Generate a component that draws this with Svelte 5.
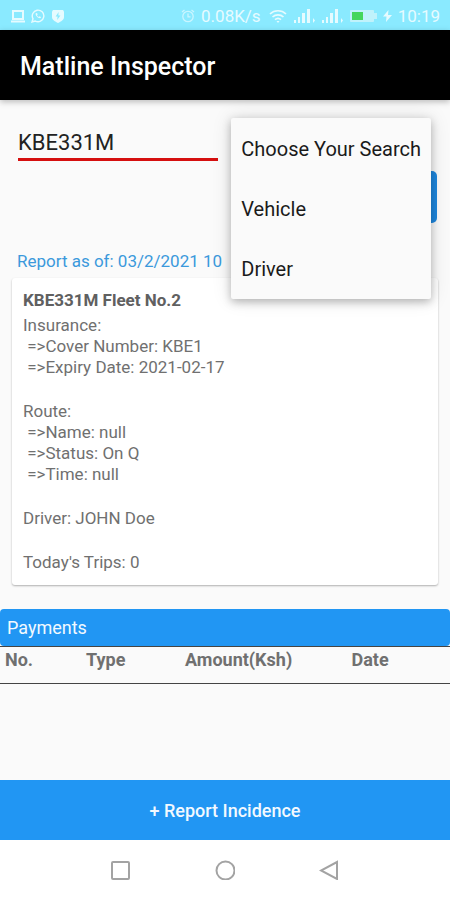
<script lang="ts">
	let plate = $state('KBE331M');
	let menuOpen = $state(true);
	let searchType = $state('Choose Your Search');

	const searchTypes = ['Choose Your Search', 'Vehicle', 'Driver'];
	const columns = ['No.', 'Type', 'Amount(Ksh)', 'Date'];

	const report = [
		['Insurance:', ' =>Cover Number: KBE1', ' =>Expiry Date: 2021-02-17'],
		['Route:', ' =>Name: null', ' =>Status: On Q', ' =>Time: null'],
		['Driver: JOHN Doe'],
		["Today's Trips: 0"]
	];

	function choose(type: string) {
		searchType = type;
		menuOpen = false;
	}
</script>

{#snippet signal()}
	<svg width="22" height="14" viewBox="0 0 22 14" fill="currentColor">
		<rect x="0" y="11" width="2" height="3" />
		<rect x="4" y="8" width="2" height="6" />
		<rect x="8" y="4" width="3" height="10" />
		<rect x="13" y="0" width="3" height="14" />
		<path d="M19 9l2 2.5-2 2.5z" />
	</svg>
{/snippet}

<div class="screen">
	<div class="status-bar">
		<div class="status-group">
			<svg width="14" height="14" viewBox="0 0 14 14" fill="none" stroke="currentColor">
				<rect x="2" y="2" width="10" height="8" stroke-width="2" />
				<path d="M0 12.5h14" stroke-width="2" />
			</svg>
			<svg width="14" height="14" viewBox="0 0 14 14" fill="none" stroke="currentColor">
				<path d="M1 13l1-3.2A5.8 5.8 0 1 1 4.2 12z" stroke-width="1.4" />
				<path
					d="M4.7 4.2c-.6 2.4 2.6 5.5 5 4.9l.3-1.2-1.5-.7-.8.7C6.9 7.5 6.3 6.9 6 6.2l.7-.8-.7-1.5z"
					fill="currentColor"
					stroke="none"
				/>
			</svg>
			<svg width="14" height="14" viewBox="0 0 14 14">
				<path d="M2 1h10l1 1.5V8c0 3-3 4.5-6 6-3-1.500-6-3-6-6V2.5z" fill="currentColor" />
				<path d="M7.6 3L4.6 7.6h2L6.2 11l3.2-4.6h-2z" fill="#8aeaff" />
			</svg>
		</div>
		<div class="status-group">
			<svg width="14" height="14" viewBox="0 0 14 14" fill="none" stroke="currentColor" opacity="0.7">
				<circle cx="7" cy="7.5" r="5.2" stroke-width="1.3" />
				<path d="M7 4.5v3.3h2.5M1 3l2.5-2M13 3l-2.500-2" stroke-width="1.3" />
			</svg>
			<span>0.08K/s</span>
			<svg class="wifi" width="18" height="14" viewBox="0 0 18 14" fill="none" stroke="currentColor">
				<path
					d="M1 5a11.5 11.5 0 0 1 16 0M3.500 8a8 8 0 0 1 11 0M6 10.7a4.5 4.5 0 0 1 6 0"
					stroke-width="1.7"
				/>
				<path d="M7.5 12h3L9 14z" fill="currentColor" stroke="none" />
			</svg>
			{@render signal()}
			{@render signal()}
			<svg width="27" height="12" viewBox="0 0 27 12">
				<rect x="0" y="0" width="24" height="12" rx="1" fill="#c0f2fb" />
				<rect x="24" y="3" width="3" height="6" fill="#c0f2fb" />
				<rect x="2" y="2" width="11" height="8" fill="#45d65b" />
			</svg>
			<svg width="9" height="12" viewBox="0 0 9 12" fill="currentColor">
				<path d="M5.5 0L0 6.5h3.5L3 12l6-7H5z" />
			</svg>
			<span>10:19</span>
		</div>
	</div>

	<header class="app-bar">
		<h1>Matline Inspector</h1>
	</header>

	<main>
		<form class="search" onsubmit={(e) => e.preventDefault()}>
			<input type="text" aria-label="Plate number" bind:value={plate} />
			<button class="search-button" type="submit" aria-label="Search"></button>
		</form>

		{#if menuOpen}
			<div class="menu" role="listbox" aria-label="Search type">
				{#each searchTypes as type}
					<button
						type="button"
						role="option"
						aria-selected={type === searchType}
						onclick={() => choose(type)}>{type}</button
					>
				{/each}
			</div>
		{/if}

		<p class="report-date">Report as of: 03/2/2021 10</p>

		<section class="card">
			<h2>KBE331M Fleet No.2</h2>
			<div class="report">
				{#each report as lines}
					<p>{lines.join('\n')}</p>
				{/each}
			</div>
		</section>

		<section class="payments">
			<h2>Payments</h2>
			<table>
				<thead>
					<tr>
						{#each columns as column}
							<th>{column}</th>
						{/each}
					</tr>
				</thead>
			</table>
		</section>
	</main>

	<button class="report-button" type="button">+ Report Incidence</button>

	<nav class="system-nav">
		<button type="button" aria-label="Recent apps">
			<svg width="20" height="20" viewBox="0 0 20 20">
				<rect x="1" y="2" width="17" height="17" rx="1" />
			</svg>
		</button>
		<button type="button" aria-label="Home">
			<svg width="20" height="20" viewBox="0 0 20 20">
				<circle cx="10.5" cy="10.5" r="9" />
			</svg>
		</button>
		<button type="button" aria-label="Back">
			<svg width="20" height="20" viewBox="0 0 20 20">
				<path d="M18 2v17L2 10.5z" />
			</svg>
		</button>
	</nav>
</div>

<style>
	:global(body) {
		margin: 0;
	}

	.screen {
		display: flex;
		flex-direction: column;
		min-height: 100vh;
		background: #fafafa;
		font-family: Roboto, 'Liberation Sans', sans-serif;
		color: #707070;
	}

	h1,
	h2,
	p {
		margin: 0;
	}

	button,
	input {
		font-family: inherit;
		border: none;
		margin: 0;
		padding: 0;
		background: none;
		border-radius: 0;
	}

	/* status bar */
	.status-bar {
		display: flex;
		justify-content: space-between;
		align-items: center;
		height: 30px;
		padding: 1px 10px 0 11px;
		box-sizing: border-box;
		background: #8aeaff;
		color: #e6fbff;
		font-size: 17px;
	}

	.status-group {
		display: flex;
		align-items: center;
		gap: 6px;
	}

	.wifi {
		margin: 0 1px 0 2px;
	}

	/* app bar */
	.app-bar {
		display: flex;
		align-items: center;
		height: 70px;
		padding: 4px 20px 0;
		box-sizing: border-box;
		background: #000;
		box-shadow: 0 2px 6px rgba(0, 0, 0, 0.25);
		color: #fff;
	}

	.app-bar h1 {
		font-size: 25px;
		line-height: 32px;
		font-weight: 500;
	}

	main {
		position: relative;
		flex: 1;
	}

	.search {
		display: flex;
		justify-content: space-between;
		align-items: flex-start;
		padding: 25px 13px 0 18px;
	}

	.search input {
		width: 200px;
		height: 36px;
		padding-top: 2px;
		box-sizing: border-box;
		border-bottom: 3px solid #d50f0f;
		outline: none;
		color: #222;
		font-size: 22px;
	}

	.search-button {
		width: 120px;
		height: 52px;
		margin-top: 46px;
		border-radius: 5px;
		background: #1e88e0;
	}

	/* drop-down list, opens over the form and the report */
	.menu {
		position: absolute;
		top: 18px;
		right: 19px;
		display: flex;
		flex-direction: column;
		padding-top: 1px;
		border-radius: 2px;
		background: #fafafa;
		box-shadow:
			0 3px 8px rgba(0, 0, 0, 0.25),
			0 0 20px rgba(0, 0, 0, 0.12);
	}

	.menu button {
		height: 60px;
		padding: 0 10px;
		text-align: left;
		font-size: 20px;
		color: #1a1a1a;
		cursor: pointer;
	}

	.report-date {
		padding: 26px 17px 5px;
		font-size: 17px;
		line-height: 24px;
		color: #3b99dc;
	}

	.card {
		margin: 0 12px;
		padding: 12px 11px;
		border-radius: 3px;
		background: #fff;
		box-shadow: 0 1px 2px rgba(0, 0, 0, 0.3);
	}

	.card h2 {
		margin-bottom: 4px;
		font-size: 17px;
		line-height: 21px;
		font-weight: 700;
		color: #606060;
	}

	.report {
		display: flex;
		flex-direction: column;
		gap: 23px;
		font-size: 17px;
		line-height: 21px;
		white-space: pre-wrap;
	}

	/* payments */
	.payments {
		margin-top: 24px;
	}

	.payments h2 {
		padding: 0 7px;
		border-radius: 4px;
		background: #2196f3;
		color: #f2f9ff;
		font-size: 18px;
		line-height: 37px;
		font-weight: 400;
	}

	table {
		width: 100%;
		table-layout: fixed;
		border-collapse: collapse;
	}

	tr {
		border-top: 1px solid #444;
		border-bottom: 1px solid #444;
	}

	th {
		box-sizing: border-box;
		padding: 2px 0 12px 5px;
		text-align: left;
		font-size: 18px;
		line-height: 22px;
		font-weight: 700;
	}

	th:nth-child(1) {
		width: 18%;
	}

	th:nth-child(2) {
		width: 22%;
	}

	th:nth-child(3) {
		width: 37%;
	}

	.report-button {
		height: 60px;
		background: #2196f3;
		color: #f2f9ff;
		font-size: 18px;
		font-weight: 500;
		cursor: pointer;
	}

	.system-nav {
		display: flex;
		justify-content: center;
		align-items: center;
		gap: 84px;
		height: 60px;
		background: #fff;
	}

	.system-nav svg {
		display: block;
		fill: none;
		stroke: #a3a3a3;
		stroke-width: 2;
	}
</style>
